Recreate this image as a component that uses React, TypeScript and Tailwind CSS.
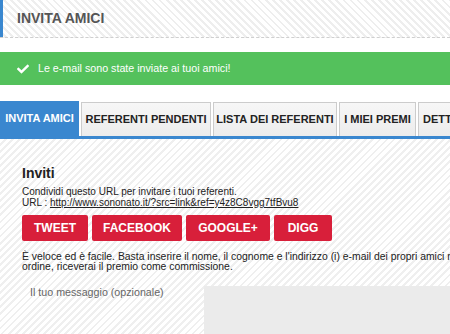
import { FaCheck } from "react-icons/fa"

const tabs = [
  { label: "INVITA AMICI", width: "w-[79px]", active: true },
  { label: "REFERENTI PENDENTI", width: "w-[130px]", active: false },
  { label: "LISTA DEI REFERENTI", width: "w-[124px]", active: false },
  { label: "I MIEI PREMI", width: "w-[77px]", active: false },
]

const shareButtons = [
  { label: "TWEET", width: "w-[66px]" },
  { label: "FACEBOOK", width: "w-[90px]" },
  { label: "GOOGLE+", width: "w-[84px]" },
  { label: "DIGG", width: "w-[58px]" },
]

export default function App() {
  return (
    <div className="w-[450px] h-[334px] overflow-hidden bg-white font-['Liberation_Sans',Arial,sans-serif]">
      <div className="h-[38px] flex items-center pl-[17px] shadow-[inset_3px_0_0_#3a87cf] border-b border-dashed border-[#cfcfcf] bg-[repeating-linear-gradient(45deg,#ffffff_0px,#ffffff_3px,#eeeeee_3px,#eeeeee_5px)]">
        <h1 className="text-[14px] font-bold text-[#555555]">INVITA AMICI</h1>
      </div>

      <div className="mt-[14px] h-[33px] flex items-center pl-[17px] gap-[9px] bg-[#54c15c] text-white">
        <FaCheck className="w-[12px] h-[12px]" />
        <span className="text-[10.7px]">Le e-mail sono state inviate ai tuoi amici!</span>
      </div>

      <div className="mt-[16px] flex items-end gap-[2px] border-b-[3px] border-[#3a87cf] whitespace-nowrap">
        {tabs.map((tab) =>
          tab.active ? (
            <div
              key={tab.label}
              className={`${tab.width} shrink-0 h-[35px] flex items-center justify-center bg-[#3a87cf] text-white text-[11px] font-bold`}
            >
              {tab.label}
            </div>
          ) : (
            <div
              key={tab.label}
              className={`${tab.width} shrink-0 h-[34px] flex items-center justify-center border border-b-0 border-[#cccccc] bg-[linear-gradient(#f7f7f7,#ececec)] text-[#222222] text-[11px] font-bold`}
            >
              {tab.label}
            </div>
          )
        )}
        <div className="w-[80px] shrink-0 h-[34px] flex items-center pl-[4px] border border-b-0 border-[#cccccc] bg-[linear-gradient(#f7f7f7,#ececec)] text-[#222222] text-[11px] font-bold">
          DETTAGLI
        </div>
      </div>

      <div className="bg-[repeating-linear-gradient(135deg,#ffffff_0px,#ffffff_3px,#efefef_3px,#efefef_5px)]">
        <div className="pl-[22px] pt-[26px] pb-[14px]">
          <h2 className="text-[14px] font-bold text-[#222222] leading-[16px]">Inviti</h2>
          <p className="mt-[5px] text-[10px] leading-[11px] text-[#222222]">Condividi questo URL per invitare i tuoi referenti.</p>
          <p className="text-[10px] leading-[11px] text-[#222222]">
            URL : <span className="underline">http://www.sononato.it/?src=link&amp;ref=y4z8C8vgg7tfBvu8</span>
          </p>

          <div className="mt-[7px] flex gap-[4px]">
            {shareButtons.map((b) => (
              <button
                key={b.label}
                className={`${b.width} h-[26px] flex items-center justify-center rounded-[2px] bg-[#d81f3a] text-white text-[12px] font-bold`}
              >
                {b.label}
              </button>
            ))}
          </div>

          <div className="mt-[11px] text-[10.4px] leading-[10px] text-[#222222] whitespace-nowrap">
            <p>È veloce ed è facile. Basta inserire il nome, il cognome e l'indirizzo (i) e-mail dei propri amici nel modulo sottostante. Per ogni</p>
            <p>ordine, riceverai il premio come commissione.</p>
          </div>
        </div>

        <div className="flex">
          <div className="w-[204px] shrink-0 pl-[30px] text-[10.7px] leading-[12px] text-[#666666]">Il tuo messaggio (opzionale)</div>
          <div className="flex-1 h-[60px] bg-[#ebebeb]" />
        </div>
      </div>
    </div>
  )
}
